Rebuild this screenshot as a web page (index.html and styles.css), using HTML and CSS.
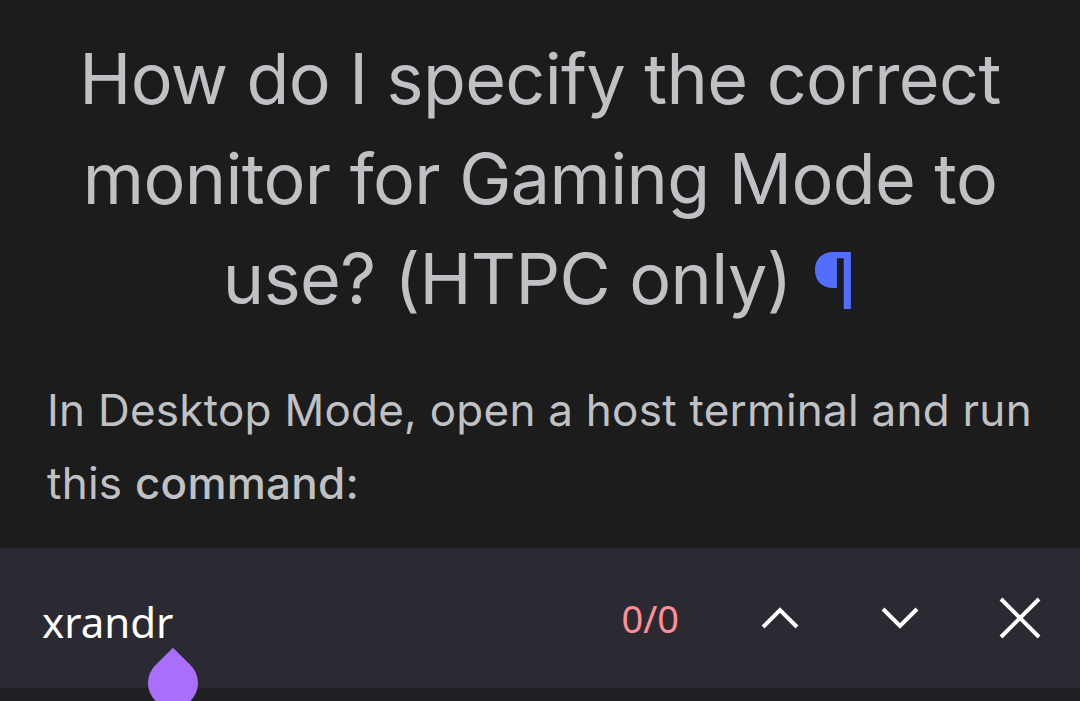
FILE: index.html
```html
<!DOCTYPE html>
<html>

<head>
    <title>Steam Deck FAQ</title>
    <link rel="stylesheet" href="styles.css">
</head>

<body>
    <div class="page">
        <h2 class="faq-title">How do I specify the correct monitor for Gaming Mode to use? (HTPC only) <a class="anchor" href="#">¶</a></h2>
        <p class="faq-text">In Desktop Mode, open a host terminal and run this <span class="strong">command:</span></p>
    </div>

    <div class="findbar">
        <div class="find-input">xrandr</div>
        <div class="find-count">0/0</div>
        <button class="find-btn" aria-label="Previous">
            <svg width="40" height="26" viewBox="0 0 40 26">
                <path d="M3 22 L20 5 L37 22" fill="none" stroke="#fff" stroke-width="4" />
            </svg>
        </button>
        <button class="find-btn" aria-label="Next">
            <svg width="40" height="26" viewBox="0 0 40 26">
                <path d="M3 4 L20 21 L37 4" fill="none" stroke="#fff" stroke-width="4" />
            </svg>
        </button>
        <button class="find-btn" aria-label="Close">
            <svg width="44" height="44" viewBox="0 0 44 44">
                <path d="M3 3 L41 41 M41 3 L3 41" fill="none" stroke="#fff" stroke-width="4" />
            </svg>
        </button>
    </div>
    <div class="navstrip"></div>

    <!-- text selection handle -->
    <div class="handle"></div>
</body>

</html>
```

FILE: styles.css
```css
body {
    background-color: #1c1c1c;
    margin: 0;
    font-family: 'Inter', 'Noto Sans', sans-serif;
    color: #c0c1c5;
    height: 701px;
    overflow: hidden;
    position: relative;
}

.page {
    padding: 29px 47px 0 47px;
    height: 519px;
}

.faq-title {
    font-size: 70px;
    font-weight: 400;
    line-height: 100px;
    letter-spacing: -0.6px;
    text-align: center;
    margin: 0;
}

.anchor {
    color: #536dfe;
    text-decoration: none;
    font-size: 78px;
    line-height: 0;
    vertical-align: -5px;
}

.faq-text {
    font-size: 44px;
    line-height: 73px;
    letter-spacing: 0.25px;
    margin: 45px 0 0 0;
}

.strong {
    font-weight: 500;
}

.findbar {
    display: flex;
    align-items: center;
    height: 140px;
    background-color: #2b2a33;
    padding: 0 20px 0 42px;
    font-family: 'Noto Sans', sans-serif;
}

.find-input {
    flex: 1;
    font-size: 42px;
    color: #ffffff;
    padding-top: 6px;
}

.find-count {
    font-size: 38px;
    color: #ff8f94;
    margin-right: 61px;
}

.find-btn {
    width: 80px;
    height: 80px;
    display: flex;
    align-items: center;
    justify-content: center;
    background: none;
    border: none;
    padding: 0;
    margin-left: 40px;
}

.find-btn:first-of-type {
    margin-left: 0;
}

.navstrip {
    height: 13px;
    background-color: #1f2125;
}

.handle {
    position: absolute;
    left: 148px;
    top: 658px;
    width: 50px;
    height: 50px;
    background-color: #a96ffb;
    border-radius: 0 50% 50% 50%;
    transform: rotate(45deg);
}
```
